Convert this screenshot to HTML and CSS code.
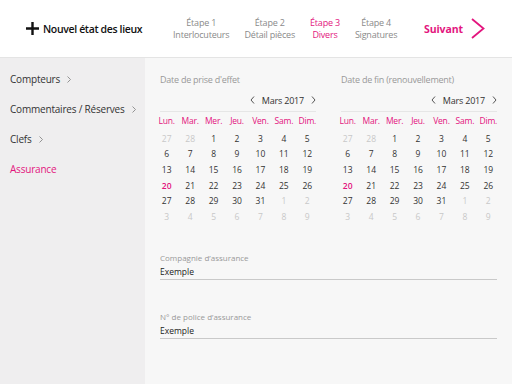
FILE: index.html
```html
<!DOCTYPE html>
<html lang="fr">
<head>
<meta charset="utf-8">
<title>Nouvel état des lieux</title>
<link rel="stylesheet" href="styles.css">
</head>
<body>
<header class="topbar">
  <div class="new">
    <svg class="plus" width="13" height="13" viewBox="0 0 13 13"><path d="M6.5 0v13M0 6.5h13" stroke="#111" stroke-width="2.4"/></svg>
    <span>Nouvel état des lieux</span>
  </div>
  <nav class="steps">
    <div class="step"><span>Étape 1</span><span>Interlocuteurs</span></div>
    <div class="step"><span>Étape 2</span><span>Détail pièces</span></div>
    <div class="step active"><span>Étape 3</span><span>Divers</span></div>
    <div class="step"><span>Étape 4</span><span>Signatures</span></div>
  </nav>
  <div class="next">
    <span>Suivant</span>
    <svg width="14" height="21" viewBox="0 0 14 21"><path d="M1 1l11.5 9.5L1 20" fill="none" stroke="#e3157e" stroke-width="1.8"/></svg>
  </div>
</header>
<div class="layout">
  <aside class="sidebar">
    <div class="side-item">Compteurs <svg class="chev" width="4" height="7" viewBox="0 0 4 7"><path d="M0.5 0.5l3 3-3 3" fill="none" stroke="#888" stroke-width="0.9"/></svg></div>
    <div class="side-item">Commentaires / Réserves <svg class="chev" width="4" height="7" viewBox="0 0 4 7"><path d="M0.5 0.5l3 3-3 3" fill="none" stroke="#888" stroke-width="0.9"/></svg></div>
    <div class="side-item">Clefs <svg class="chev" width="4" height="7" viewBox="0 0 4 7"><path d="M0.5 0.5l3 3-3 3" fill="none" stroke="#888" stroke-width="0.9"/></svg></div>
    <div class="side-item active">Assurance</div>
  </aside>
  <main class="content">
    <div class="calendars">
      <section class="cal">
        <div class="cal-head">
          <div class="cal-title">Date de prise d'effet</div>
          <div class="month-nav">
            <svg width="5" height="8" viewBox="0 0 5 8"><path d="M4 0.5L1 4l3 3.5" fill="none" stroke="#555" stroke-width="1"/></svg>
            <span>Mars 2017</span>
            <svg width="5" height="8" viewBox="0 0 5 8"><path d="M1 0.5L4 4 1 7.5" fill="none" stroke="#555" stroke-width="1"/></svg>
          </div>
        </div>
        <div class="grid">
          <span class="wd">Lun.</span><span class="wd">Mar.</span><span class="wd">Mer.</span><span class="wd">Jeu.</span><span class="wd">Ven.</span><span class="wd">Sam.</span><span class="wd">Dim.</span>
          <span class="out">27</span><span class="out">28</span><span>1</span><span>2</span><span>3</span><span>4</span><span>5</span>
          <span>6</span><span>7</span><span>8</span><span>9</span><span>10</span><span>11</span><span>12</span>
          <span>13</span><span>14</span><span>15</span><span>16</span><span>17</span><span>18</span><span>19</span>
          <span class="today">20</span><span>21</span><span>22</span><span>23</span><span>24</span><span>25</span><span>26</span>
          <span>27</span><span>28</span><span>29</span><span>30</span><span>31</span><span class="out">1</span><span class="out">2</span>
          <span class="out">3</span><span class="out">4</span><span class="out">5</span><span class="out">6</span><span class="out">7</span><span class="out">8</span><span class="out">9</span>
        </div>
      </section>
      <section class="cal">
        <div class="cal-head">
          <div class="cal-title">Date de fin (renouvellement)</div>
          <div class="month-nav">
            <svg width="5" height="8" viewBox="0 0 5 8"><path d="M4 0.5L1 4l3 3.5" fill="none" stroke="#555" stroke-width="1"/></svg>
            <span>Mars 2017</span>
            <svg width="5" height="8" viewBox="0 0 5 8"><path d="M1 0.5L4 4 1 7.5" fill="none" stroke="#555" stroke-width="1"/></svg>
          </div>
        </div>
        <div class="grid">
          <span class="wd">Lun.</span><span class="wd">Mar.</span><span class="wd">Mer.</span><span class="wd">Jeu.</span><span class="wd">Ven.</span><span class="wd">Sam.</span><span class="wd">Dim.</span>
          <span class="out">27</span><span class="out">28</span><span>1</span><span>2</span><span>3</span><span>4</span><span>5</span>
          <span>6</span><span>7</span><span>8</span><span>9</span><span>10</span><span>11</span><span>12</span>
          <span>13</span><span>14</span><span>15</span><span>16</span><span>17</span><span>18</span><span>19</span>
          <span class="today">20</span><span>21</span><span>22</span><span>23</span><span>24</span><span>25</span><span>26</span>
          <span>27</span><span>28</span><span>29</span><span>30</span><span>31</span><span class="out">1</span><span class="out">2</span>
          <span class="out">3</span><span class="out">4</span><span class="out">5</span><span class="out">6</span><span class="out">7</span><span class="out">8</span><span class="out">9</span>
        </div>
      </section>
    </div>
    <div class="field first">
      <div class="field-label">Compagnie d’assurance</div>
      <div class="field-value">Exemple</div>
    </div>
    <div class="field">
      <div class="field-label">N° de police d’assurance</div>
      <div class="field-value">Exemple</div>
    </div>
  </main>
</div>
</body>
</html>
```
FILE: styles.css
```css
* { box-sizing: border-box; }
html, body { margin: 0; padding: 0; }
body {
  width: 512px;
  height: 384px;
  overflow: hidden;
  font-family: "Open Sans", "Noto Sans", sans-serif;
  color: #222;
  display: flex;
  flex-direction: column;
  background: #f7f7f7;
  white-space: nowrap;
}
.topbar {
  height: 58px;
  flex: none;
  background: #fff;
  border-bottom: 1px solid #e4e4e4;
  display: flex;
  align-items: center;
  padding: 0 27px 0 26px;
}
.new {
  flex: none;
  display: flex;
  align-items: center;
  gap: 4px;
  font-size: 10.5px;
  font-weight: 600;
  color: #111;
  letter-spacing: -0.35px;
  width: 147px;
}
.steps {
  flex: none;
  display: flex;
  gap: 15px;
  letter-spacing: -0.2px;
}
.step {
  display: flex;
  flex-direction: column;
  align-items: center;
  font-size: 9px;
  line-height: 12px;
  color: #8a8a8a;
}
.step.active { color: #e3157e; }
.next {
  flex: none;
  margin-left: auto;
  display: flex;
  align-items: center;
  gap: 8px;
  font-size: 10.5px;
  font-weight: 700;
  letter-spacing: -0.1px;
  color: #e3157e;
}
.layout {
  flex: 1;
  display: flex;
  min-height: 0;
}
.sidebar {
  width: 145px;
  flex: none;
  background: #efeeef;
  padding-top: 6px;
}
.side-item {
  height: 30px;
  display: flex;
  align-items: center;
  gap: 7px;
  padding-left: 10px;
  font-size: 10px;
  letter-spacing: -0.2px;
  color: #333;
}
.side-item.active { color: #e3157e; }
.content {
  flex: 1;
  padding: 15px 12px 0 10px;
}
.calendars {
  display: flex;
  gap: 17px;
}
.cal { width: 164px; flex: none; }
.cal-head { padding: 0 3px 0 5px; }
.cal-title {
  font-size: 9px;
  line-height: 14px;
  letter-spacing: -0.25px;
  color: #999;
}
.month-nav {
  margin-top: 6px;
  display: flex;
  justify-content: flex-end;
  align-items: center;
  gap: 7px;
  height: 14px;
  font-size: 9px;
  letter-spacing: -0.2px;
  color: #333;
  border-bottom: 1px solid #e6e6e6;
  box-sizing: content-box;
  padding-bottom: 4px;
}
.grid {
  margin-top: 3px;
  display: grid;
  grid-template-columns: repeat(7, 1fr);
  grid-auto-rows: 15.6px;
  font-size: 8.5px;
  text-align: center;
  color: #333;
  align-items: center;
}
.grid .wd { color: #e3157e; height: 15px; letter-spacing: -0.2px; }
.grid .out { color: #c8c8c8; }
.grid .today { color: #e3157e; font-weight: 600; }
.field {
  margin: 31px 3px 0 5px;
  border-bottom: 1px solid #c9c9c9;
}
.field.first { margin-top: 28px; }
.field-label {
  font-size: 8px;
  line-height: 12px;
  color: #999;
}
.field-value {
  font-size: 8.5px;
  line-height: 13px;
  color: #222;
  padding-top: 1px;
  padding-bottom: 1px;
}
```
